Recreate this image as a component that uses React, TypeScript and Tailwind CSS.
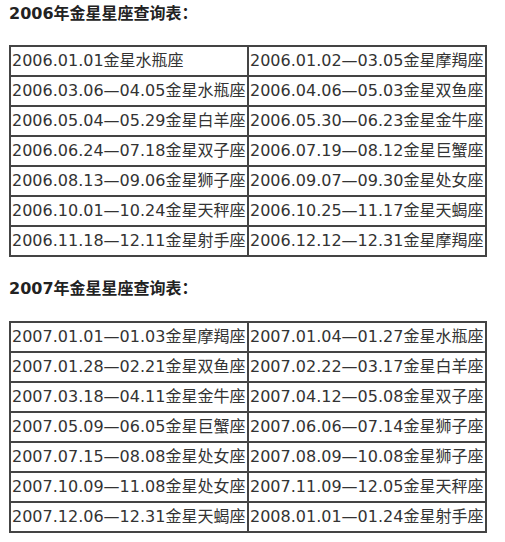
const tabla2006: [string, string][] = [
  ['2006.01.01金星水瓶座', '2006.01.02—03.05金星摩羯座'],
  ['2006.03.06—04.05金星水瓶座', '2006.04.06—05.03金星双鱼座'],
  ['2006.05.04—05.29金星白羊座', '2006.05.30—06.23金星金牛座'],
  ['2006.06.24—07.18金星双子座', '2006.07.19—08.12金星巨蟹座'],
  ['2006.08.13—09.06金星狮子座', '2006.09.07—09.30金星处女座'],
  ['2006.10.01—10.24金星天秤座', '2006.10.25—11.17金星天蝎座'],
  ['2006.11.18—12.11金星射手座', '2006.12.12—12.31金星摩羯座'],
]

const tabla2007: [string, string][] = [
  ['2007.01.01—01.03金星摩羯座', '2007.01.04—01.27金星水瓶座'],
  ['2007.01.28—02.21金星双鱼座', '2007.02.22—03.17金星白羊座'],
  ['2007.03.18—04.11金星金牛座', '2007.04.12—05.08金星双子座'],
  ['2007.05.09—06.05金星巨蟹座', '2007.06.06—07.14金星狮子座'],
  ['2007.07.15—08.08金星处女座', '2007.08.09—10.08金星狮子座'],
  ['2007.10.09—11.08金星处女座', '2007.11.09—12.05金星天秤座'],
  ['2007.12.06—12.31金星天蝎座', '2008.01.01—01.24金星射手座'],
]

const fuente = { fontFamily: '"DejaVu Sans", "Noto Sans CJK SC", sans-serif' }

const Tabla = ({ filas }: { filas: [string, string][] }) => (
  <table className="w-[478px] border-collapse border-2 border-[#444] table-fixed">
    <tbody>
      {filas.map(([a, b]) => (
        <tr key={a} className="h-[30px]">
          <td className="border-2 border-[#444] px-px py-0 text-[16px] leading-[26px] text-[#333] whitespace-nowrap">
            {a}
          </td>
          <td className="border-2 border-[#444] px-px py-0 text-[16px] leading-[26px] text-[#333] whitespace-nowrap">
            {b}
          </td>
        </tr>
      ))}
    </tbody>
  </table>
)

export default function App() {
  return (
    <div className="w-[505px] h-[542px] bg-white pl-[9px] overflow-hidden" style={fuente}>
      <h2 className="h-[28px] flex items-center text-[16px] font-bold text-[#222]">2006年金星星座查询表：</h2>
      <div className="mt-[17px]">
        <Tabla filas={tabla2006} />
      </div>
      <h2 className="mt-[18px] h-[28px] flex items-center text-[16px] font-bold text-[#222]">2007年金星星座查询表：</h2>
      <div className="mt-[18px]">
        <Tabla filas={tabla2007} />
      </div>
    </div>
  )
}
